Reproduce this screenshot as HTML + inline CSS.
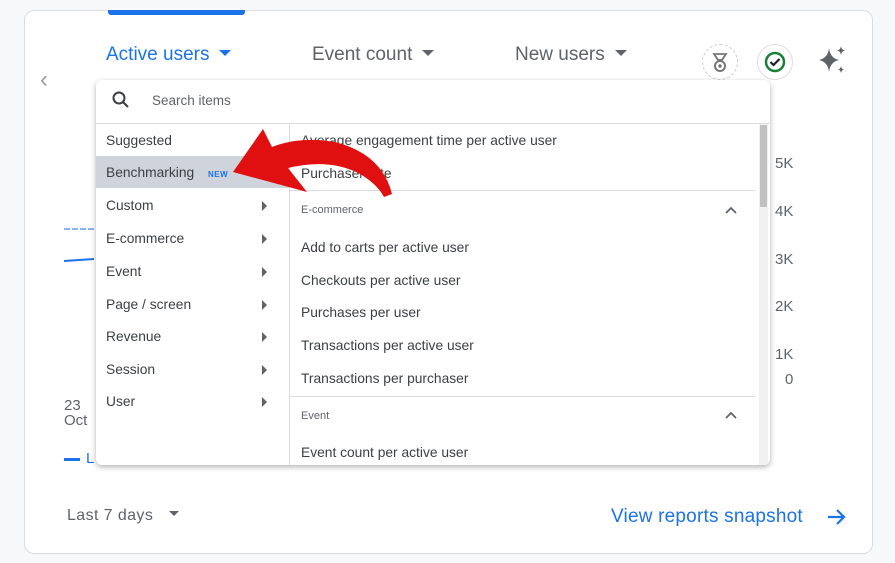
<!DOCTYPE html>
<html><head><style>
body{margin:0;width:895px;height:563px;background:#f7f8f9;font-family:"Liberation Sans",Arial,sans-serif;position:relative;overflow:hidden}
.card{position:absolute;left:24px;top:10px;width:847px;height:542px;background:#fff;border:1px solid #dadce0;border-radius:10px}
.abs{position:absolute;white-space:nowrap}
.tab{font-size:19px;color:#5f6368}
.tri{display:inline-block;width:0;height:0;border-left:6px solid transparent;border-right:6px solid transparent;border-top:6px solid currentColor;vertical-align:middle;margin-left:10px;position:relative;top:-2px}
.dd{position:absolute;left:96px;top:80px;width:674px;height:385px;background:#fff;border-radius:6px;box-shadow:0 2px 6px rgba(0,0,0,.3);overflow:hidden}
.l{font-size:13.8px;color:#3c4043;position:absolute;left:10px}
.r{font-size:13.8px;color:#3c4043;position:absolute;left:205px}
.h{font-size:11px;color:#5f6368;position:absolute;left:205px}
.ar{position:absolute;left:166px;width:0;height:0;border-top:5px solid transparent;border-bottom:5px solid transparent;border-left:5px solid #5f6368}
.ax{font-size:15px;color:#5f6368}
</style></head><body>
<div class="card"></div>
<div class="abs" style="left:108px;top:10px;width:137px;height:5px;background:#1a73e8;border-radius:0 0 3px 3px"></div>
<div class="abs tab" style="left:106px;top:44px;color:#1a73e8">Active users<span class="tri"></span></div>
<div class="abs tab" style="left:312px;top:44px">Event count<span class="tri"></span></div>
<div class="abs tab" style="left:515px;top:44px">New users<span class="tri"></span></div>
<div class="abs" style="left:40px;top:66px;font-size:24px;color:#9aa0a6">&#8249;</div>
<div class="abs" style="left:702px;top:44px;width:34px;height:34px;border:1px dashed #ccc;border-radius:50%"><svg width="34" height="34"><path d="M11 9h12l-4 6h-4z" fill="none" stroke="#777" stroke-width="1.8"/><circle cx="17" cy="21" r="5" fill="none" stroke="#777" stroke-width="2"/><circle cx="17" cy="21" r="1.8" fill="#777"/></svg></div>
<div class="abs" style="left:757px;top:44px;width:34px;height:34px;border:1px solid #ddd;border-radius:50%"><svg width="34" height="34"><circle cx="17" cy="17" r="9" fill="none" stroke="#188038" stroke-width="2.5"/><path d="M12.5 17l3 3 6-6" fill="none" stroke="#202124" stroke-width="2.2"/></svg></div>
<svg class="abs" style="left:815px;top:44px" width="34" height="34"><path d="M14 4 Q15 14 24 16 Q15 18 14 28 Q13 18 4 16 Q13 14 14 4Z" fill="#5f6368"/><path d="M26 2 Q26.5 6 30 6.5 Q26.5 7 26 11 Q25.5 7 22 6.5 Q25.5 6 26 2Z" fill="#5f6368"/><path d="M26 22 Q26.5 25 29 25.5 Q26.5 26 26 29 Q25.5 26 23 25.5 Q25.5 25 26 22Z" fill="#5f6368"/></svg>
<div class="abs ax" style="left:775px;top:155px">5K</div>
<div class="abs ax" style="left:775px;top:203px">4K</div>
<div class="abs ax" style="left:775px;top:251px">3K</div>
<div class="abs ax" style="left:775px;top:298px">2K</div>
<div class="abs ax" style="left:775px;top:346px">1K</div>
<div class="abs ax" style="left:785px;top:371px">0</div>
<div class="abs" style="left:64px;top:398px;font-size:15px;color:#5f6368;line-height:15px">23<br>Oct</div>
<div class="abs" style="left:64px;top:228px;width:30px;border-top:2px dashed #8ab4f8"></div>
<div class="abs" style="left:64px;top:259px;width:30px;border-top:2px solid #1a73e8;transform:rotate(-4deg)"></div>
<div class="abs" style="left:64px;top:458px;width:16px;height:3px;background:#1a73e8"></div>
<div class="abs" style="left:86px;top:450px;font-size:15px;color:#1a73e8">L</div>
<div class="abs" style="left:67px;top:507px;font-size:16px;letter-spacing:.4px;color:#5f6368">Last 7 days<span class="tri" style="border-width:5px 5px 0;margin-left:16px"></span></div>
<div class="abs" style="left:611px;top:506px;font-size:19px;letter-spacing:.2px;color:#1a73e8">View reports snapshot</div>
<svg class="abs" style="left:826px;top:507px" width="22" height="20"><path d="M2 10h16M11 3l7 7-7 7" fill="none" stroke="#1a73e8" stroke-width="2.2"/></svg>
<div class="dd">
 <svg class="abs" style="left:16px;top:11px" width="18" height="18"><circle cx="7" cy="7" r="5.5" fill="none" stroke="#3c4043" stroke-width="2"/><path d="M11 11l5 5" stroke="#3c4043" stroke-width="2.2"/></svg>
 <div class="abs" style="left:56px;top:13px;font-size:13.5px;color:#5f6368">Search items</div>
 <div class="abs" style="left:0;top:43px;width:674px;border-top:1px solid #dadce0"></div>
 <div class="abs" style="left:193px;top:43px;height:342px;border-left:1px solid #dadce0"></div>
 <div class="abs" style="left:0;top:76px;width:193px;height:32px;background:#cfd4dc"></div>
 <div class="l" style="top:53px">Suggested</div>
 <div class="l" style="top:85px">Benchmarking <span style="font-size:8px;color:#1a73e8;font-weight:bold;margin-left:10px;letter-spacing:.5px">NEW</span></div>
 <div class="l" style="top:118px">Custom</div><div class="ar" style="top:121px"></div>
 <div class="l" style="top:151px">E-commerce</div><div class="ar" style="top:154px"></div>
 <div class="l" style="top:184px">Event</div><div class="ar" style="top:187px"></div>
 <div class="l" style="top:217px">Page / screen</div><div class="ar" style="top:220px"></div>
 <div class="l" style="top:249px">Revenue</div><div class="ar" style="top:252px"></div>
 <div class="l" style="top:282px">Session</div><div class="ar" style="top:285px"></div>
 <div class="l" style="top:314px">User</div><div class="ar" style="top:317px"></div>
 <div class="r" style="top:53px">Average engagement time per active user</div>
 <div class="r" style="top:86px">Purchaser rate</div>
 <div class="abs" style="left:193px;top:110px;width:466px;border-top:1px solid #dadce0"></div>
 <div class="h" style="top:124px">E-commerce</div>
 <svg class="abs" style="left:628px;top:125px" width="14" height="10"><path d="M2 8l5-5 5 5" fill="none" stroke="#5f6368" stroke-width="1.8"/></svg>
 <div class="r" style="top:160px">Add to carts per active user</div>
 <div class="r" style="top:193px">Checkouts per active user</div>
 <div class="r" style="top:225px">Purchases per user</div>
 <div class="r" style="top:258px">Transactions per active user</div>
 <div class="r" style="top:291px">Transactions per purchaser</div>
 <div class="abs" style="left:193px;top:316px;width:466px;border-top:1px solid #dadce0"></div>
 <div class="h" style="top:330px">Event</div>
 <svg class="abs" style="left:628px;top:330px" width="14" height="10"><path d="M2 8l5-5 5 5" fill="none" stroke="#5f6368" stroke-width="1.8"/></svg>
 <div class="r" style="top:365px">Event count per active user</div>
 <div class="abs" style="left:663px;top:44px;width:9px;height:341px;background:#f1f1f1"></div>
 <div class="abs" style="left:664px;top:45px;width:7px;height:82px;background:#c1c1c1"></div>
</div>
<svg class="abs" style="left:0;top:0" width="895" height="563"><path d="M263 129 L233 172 L307 192 L288 168 Q330 158 360 174 Q377 184 384 197 L392 194 Q382 154 335 142 Q300 136 272 147 Z" fill="#e01010"/></svg>
</body></html>
